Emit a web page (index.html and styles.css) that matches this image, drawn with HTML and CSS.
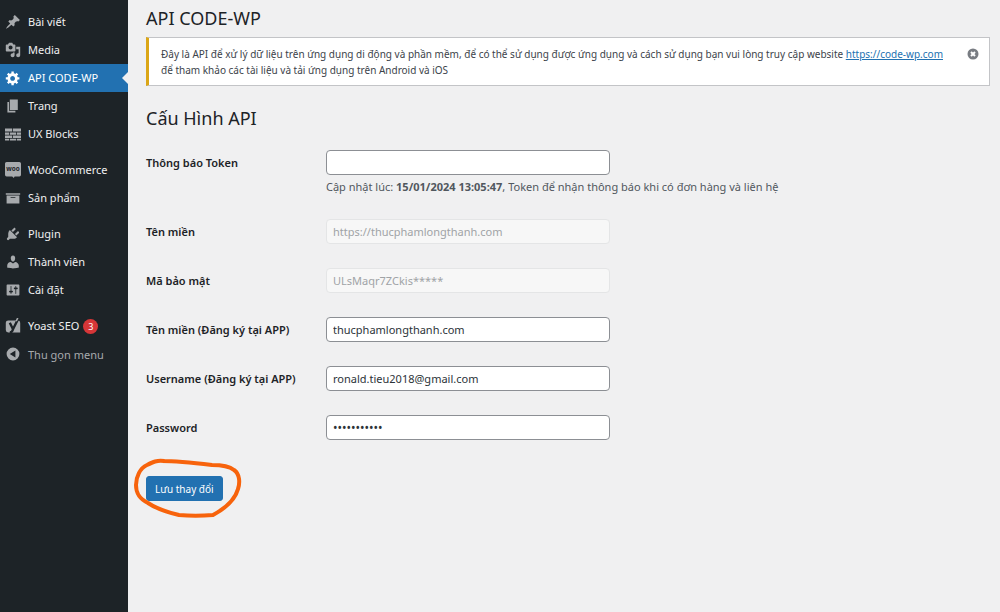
FILE: index.html
```html
<!DOCTYPE html>
<html lang="vi">
<head>
  <meta charset="UTF-8" />
  <meta name="viewport" content="width=device-width, initial-scale=1.0"/>
  <title>API CODE-WP</title>
  <link rel="stylesheet" href="styles.css">
</head>
<body>
  <nav class="sidebar">
    <ul class="menu">
      <li><a href="#"><svg class="icon" viewBox="0 0 20 20"><path d="M10.44 3.02l1.82-1.82 6.36 6.35-1.83 1.82c-1.05-.68-2.48-.57-3.41.36l-.75.75c-.92.93-1.04 2.35-.35 3.41l-1.83 1.82-2.41-2.41-2.8 2.79c-.42.42-3.38 2.71-3.8 2.29s1.86-3.39 2.28-3.81l2.79-2.79L4.1 9.36l1.83-1.82c1.05.69 2.48.57 3.4-.36l.75-.75c.93-.92 1.05-2.35.36-3.41z"/></svg>Bài viết</a></li>
      <li><a href="#"><svg class="icon" viewBox="0 0 20 20"><path d="M13 11V4c0-.55-.45-1-1-1h-1.67L9 1H5L3.67 3H2c-.55 0-1 .45-1 1v7c0 .55.45 1 1 1h10c.55 0 1-.45 1-1zM7 4.5c1.38 0 2.5 1.12 2.5 2.5S8.38 9.5 7 9.5 4.5 8.38 4.5 7 5.62 4.5 7 4.5zM14 6h5v10.5c0 1.38-1.12 2.5-2.5 2.5S14 17.88 14 16.5s1.12-2.5 2.5-2.5c.17 0 .34.02.5.05V9h-3V6zm-4 8.05V13h2v3.5c0 1.38-1.12 2.5-2.5 2.5S7 17.88 7 16.5 8.12 14 9.5 14c.17 0 .34.02.5.05z"/></svg>Media</a></li>
      <li class="current"><a href="#"><svg class="icon" viewBox="0 0 20 20"><path d="M18 12h-2.18c-.17.7-.44 1.35-.81 1.93l1.54 1.54-2.1 2.1-1.54-1.54c-.58.36-1.23.63-1.91.79V19H8v-2.18c-.68-.16-1.33-.43-1.91-.79l-1.54 1.54-2.12-2.12 1.54-1.54c-.36-.58-.63-1.23-.79-1.91H1V9.03h2.17c.16-.7.44-1.35.8-1.94L2.43 5.55l2.1-2.1 1.54 1.54c.58-.37 1.24-.64 1.93-.81V2h3v2.18c.68.16 1.33.43 1.91.79l1.54-1.54 2.12 2.12-1.54 1.54c.36.59.64 1.24.8 1.94H18V12zm-8.5 1.5c1.66 0 3-1.34 3-3s-1.34-3-3-3-3 1.34-3 3 1.34 3 3 3z"/></svg>API CODE-WP</a></li>
      <li><a href="#"><svg class="icon" viewBox="0 0 20 20"><path d="M6 15V2h10v13H6zm-1 1h8v2H3V5h2v11z"/></svg>Trang</a></li>
      <li><a href="#"><svg class="icon" viewBox="0 0 20 20"><path d="M0 3h9v4H0zM10 3h10v4H10zM0 8h5v3H0zM6 8h8v3H6zM15 8h5v3h-5zM0 12h9v3H0zM10 12h10v3H10zM0 16h5v2H0zM6 16h8v2H6zM15 16h5v2h-5z"/></svg>UX Blocks</a></li>
      <li class="group"><a href="#"><svg class="icon" viewBox="0 0 20 20"><path d="M2 0h16q2 0 2 2v14q0 2-2 2h-6l-1 2-2-2H2q-2 0-2-2V2q0-2 2-2z"/><text class="woo" x="10" y="11" text-anchor="middle">woo</text></svg>WooCommerce</a></li>
      <li><a href="#"><svg class="icon" viewBox="0 0 20 20"><path d="M19 4v2H1V4h18zM2 7h16v10H2V7zm11 3V9H7v1h6z"/></svg>Sản phẩm</a></li>
      <li class="group"><a href="#"><svg class="icon" viewBox="0 0 20 20"><path d="M13.11 4.36L9.87 7.6 8 5.73l3.24-3.24c.35-.34 1.05-.2 1.56.32.52.51.66 1.21.31 1.55zm-8 1.77l.91-1.12 9.01 9.01-1.19.84c-.71.71-2.63 1.16-3.82 1.16H6.14L4.9 17.26c-.59.59-1.54.59-2.12 0-.59-.58-.59-1.53 0-2.12l1.24-1.24v-3.88c0-1.13.4-3.19 1.09-3.89zm7.26 3.97l3.24-3.24c.34-.35 1.04-.21 1.55.31.52.51.66 1.21.31 1.55l-3.24 3.25z"/></svg>Plugin</a></li>
      <li><a href="#"><svg class="icon" viewBox="0 0 20 20"><path d="M10 9.25c-2.27 0-2.73-3.44-2.73-3.44C7 4.02 7.82 2 9.97 2c2.16 0 2.98 2.02 2.71 3.81 0 0-.41 3.44-2.68 3.44zm0 2.57L12.72 10c2.39 0 4.52 2.33 4.52 4.53v2.49s-3.65 1.13-7.24 1.13c-3.65 0-7.24-1.13-7.24-1.13v-2.49c0-2.25 1.94-4.48 4.47-4.48z"/></svg>Thành viên</a></li>
      <li><a href="#"><svg class="icon" viewBox="0 0 20 20"><path d="M18 16V4c0-.55-.45-1-1-1H3c-.55 0-1 .45-1 1v12c0 .55.45 1 1 1h14c.55 0 1-.45 1-1zM8 11h1c.55 0 1 .45 1 1s-.45 1-1 1H8v1.5c0 .28-.22.5-.5.5s-.5-.22-.5-.5V13H6c-.55 0-1-.45-1-1s.45-1 1-1h1V5.5c0-.28.22-.5.5-.5s.5.22.5.5V11zm5-2h-1c-.55 0-1-.45-1-1s.45-1 1-1h1V5.5c0-.28.22-.5.5-.5s.5.22.5.5V7h1c.55 0 1 .45 1 1s-.45 1-1 1h-1v5.5c0 .28-.22.5-.5.5s-.5-.22-.5-.5V9z"/></svg>Cài đặt</a></li>
      <li class="group"><a href="#"><svg class="icon" viewBox="0 0 20 20"><path d="M4 3h12q3 0 3 3v12H4q-3 0-3-3V6q0-3 3-3z"/><path class="yoast-gap" d="M6 6l4 8M17 0l-7 14q-1 4-4 4"/><path class="yoast" d="M16 0l-2 4"/></svg>Yoast SEO<span class="badge">3</span></a></li>
      <li><button type="button" class="collapse"><svg class="icon" viewBox="0 0 20 20"><path fill-rule="evenodd" d="M10 2a8 8 0 1 0 0 16 8 8 0 0 0 0-16zm3 3.500v9L6 10z"/></svg>Thu gọn menu</button></li>
    </ul>
  </nav>

  <main class="content">
    <h1>API CODE-WP</h1>

    <div class="notice">
      <p>Đây là API để xử lý dữ liệu trên ứng dụng di động và phần mềm, để có thể sử dụng được ứng dụng và cách sử dụng bạn vui lòng truy cập website <a href="https://code-wp.com">https://code-wp.com</a> để tham khảo các tài liệu và tải ứng dụng trên Android và iOS</p>
      <button type="button" class="dismiss" aria-label="Dismiss">
        <svg viewBox="0 0 12 12"><circle cx="6" cy="6" r="5.500"/><path d="M4 4l4 4M8 4l-4 4"/></svg>
      </button>
    </div>

    <h2>Cấu Hình API</h2>

    <form>
      <div class="row">
        <label for="token">Thông báo Token</label>
        <div class="field">
          <input type="text" id="token" />
          <p class="description">Cập nhật lúc: <strong>15/01/2024 13:05:47</strong>, Token để nhận thông báo khi có đơn hàng và liên hệ</p>
        </div>
      </div>
      <div class="row">
        <label for="domain">Tên miền</label>
        <div class="field"><input type="text" id="domain" value="https://thucphamlongthanh.com" disabled /></div>
      </div>
      <div class="row">
        <label for="secret">Mã bảo mật</label>
        <div class="field"><input type="text" id="secret" value="ULsMaqr7ZCkis*****" disabled /></div>
      </div>
      <div class="row">
        <label for="app-domain">Tên miền (Đăng ký tại APP)</label>
        <div class="field"><input type="text" id="app-domain" value="thucphamlongthanh.com" /></div>
      </div>
      <div class="row">
        <label for="username">Username (Đăng ký tại APP)</label>
        <div class="field"><input type="text" id="username" value="ronald.tieu2018@gmail.com" /></div>
      </div>
      <div class="row">
        <label for="password">Password</label>
        <div class="field"><input type="password" id="password" value="12345678901" /></div>
      </div>

      <div class="submit">
        <button type="submit" class="save">Lưu thay đổi</button>
        <svg class="marker" viewBox="0 0 110 60"><path d="M29 3C45 3 62 5 79 7C88 7 96 8 101 12C107 16 107 25 105 31C102 42 93 50 80 57C68 58 57 58 46 57C33 54 24 51 15 45C5 40 3 34 3 27C3 19 7 10 14 7C20 4 24 2 31 3"/></svg>
      </div>
    </form>
  </main>
</body>
</html>
```
FILE: styles.css
```css
* {
  box-sizing: border-box;
}
body {
  margin: 0;
  min-height: 100vh;
  display: flex;
  background: #f0f0f1;
  color: #3c434a;
  font-family: 'Segoe UI', 'Noto Sans', sans-serif;
  font-size: 11px;
  line-height: 16px;
}
h1, h2 {
  margin: 0;
  color: #1d2327;
  font-size: 18px;
  font-weight: 400;
  line-height: 24px;
}
p {
  margin: 0;
}
button, input {
  font-family: inherit;
  font-size: 11px;
}

/* admin menu */
.sidebar {
  flex: 0 0 128px;
  background: #1d2327;
}
.menu {
  list-style: none;
  margin: 0;
  padding: 8px 0;
}
.menu .group {
  margin-top: 8px;
}
.menu a, .collapse {
  display: flex;
  align-items: center;
  gap: 7px;
  width: 100%;
  height: 28px;
  padding: 0 5px;
  color: #f0f0f1;
  font-size: 11px;
  text-decoration: none;
  white-space: nowrap;
}
.menu .collapse {
  border: 0;
  background: none;
  color: #a7aaad;
}
.icon {
  flex: none;
  width: 16px;
  height: 16px;
  fill: #a7aaad;
}
.woo {
  fill: #1d2327;
  font-size: 8px;
  font-weight: 700;
}
.yoast, .yoast-gap {
  fill: none;
  stroke: #a7aaad;
  stroke-width: 2;
}
.yoast-gap {
  stroke: #1d2327;
  stroke-width: 3;
}
.current {
  position: relative;
  background: #2271b1;
}
.current a {
  color: #fff;
}
.current .icon {
  fill: #fff;
}
.current::after {
  content: "";
  position: absolute;
  right: 0;
  top: 8px;
  border: 6px solid transparent;
  border-left: 0;
  border-right-color: #f0f0f1;
}
.badge {
  width: 15px;
  height: 15px;
  margin-left: -3px;
  border-radius: 50%;
  background: #d63638;
  color: #fff;
  font-size: 9px;
  line-height: 15px;
  text-align: center;
}

/* page */
.content {
  flex: 1;
  min-width: 0;
  padding: 6px 10px 20px 18px;
}
.notice {
  display: flex;
  justify-content: space-between;
  align-items: flex-start;
  gap: 24px;
  margin: 7px 0 20px;
  padding: 8px 10px 7px 12px;
  border: 1px solid #c3c4c7;
  border-left: 3px solid #dba617;
  background: #fff;
  font-size: 10px;
}
.notice a {
  color: #2271b1;
}
.dismiss {
  flex: none;
  width: 12px;
  height: 16px;
  padding: 0;
  border: 0;
  background: none;
}
.dismiss svg {
  display: block;
  width: 12px;
  height: 12px;
  fill: #787c82;
  stroke: #fff;
  stroke-width: 2;
}
.dismiss circle {
  stroke: none;
}

/* form */
form {
  padding-top: 8px;
}
.row {
  display: flex;
  gap: 12px;
  padding: 12px 0;
}
.row label {
  flex: 0 0 168px;
  color: #1d2327;
  font-weight: 600;
  line-height: 25px;
}
.field {
  flex: 1;
}
.field input {
  display: block;
  width: 284px;
  max-width: 100%;
  height: 25px;
  padding: 0 6px;
  border: 1px solid #8c8f94;
  border-radius: 4px;
  background: #fff;
  color: #2c3338;
}
.field input[type="password"] {
  font-size: 12px;
}
.field input:disabled {
  border-color: #e4e5e6;
  background: #f7f7f7;
  color: #a0a3a6;
}
.description {
  padding-top: 4px;
  color: #50575e;
}
.submit {
  position: relative;
  width: fit-content;
  margin-top: 24px;
}
.save {
  height: 25px;
  padding: 0 8px;
  border: 1px solid #2271b1;
  border-radius: 3px;
  background: #2271b1;
  color: #fff;
  font-size: 10px;
}
/* hand drawn ring round the save button */
.marker {
  position: absolute;
  left: -13px;
  top: -18px;
  width: 110px;
  height: 60px;
  fill: none;
  stroke: #f7630c;
  stroke-width: 4;
  stroke-linecap: round;
  pointer-events: none;
}
```
